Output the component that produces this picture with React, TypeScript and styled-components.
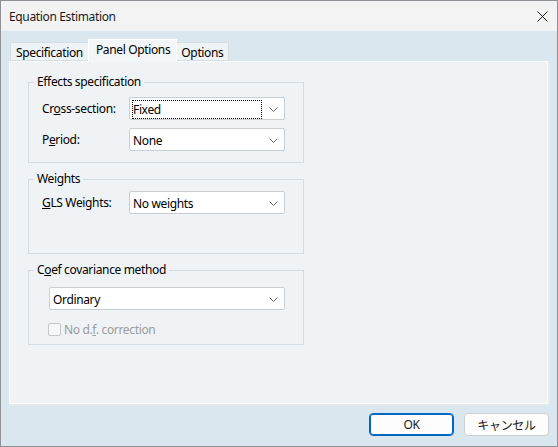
import React from "react";
import styled, { createGlobalStyle } from "styled-components";

const GlobalStyle = createGlobalStyle`
  html, body {
    margin: 0;
    padding: 0;
    background: #ffffff;
  }
  body {
    font-family: "Noto Sans", "Noto Sans CJK JP", sans-serif;
    font-size: 12px;
    letter-spacing: -0.35px;
    color: #000;
  }
`;

const Chevron = () => (
  <svg width="9" height="5" viewBox="0 0 9 5">
    <polyline points="0.5,0.5 4.5,4.5 8.5,0.5" fill="none" stroke="#6a6a6a" strokeWidth="1" />
  </svg>
);

const CloseIcon = () => (
  <svg width="11" height="11" viewBox="0 0 11 11">
    <path d="M0.5 0.5 L10.5 10.5 M10.5 0.5 L0.5 10.5" stroke="#1a1a1a" strokeWidth="1" fill="none" />
  </svg>
);

const Combo = ({ value, width, focused }: { value: string; width: number; focused?: boolean }) => (
  <ComboBox $w={width}>
    <ComboText $focused={focused}>{value}</ComboText>
    <Chevron />
  </ComboBox>
);

const App = () => {
  return (
    <>
      <GlobalStyle />
      <Window>
        <TitleBar>
          <Title>Equation Estimation</Title>
          <CloseButton>
            <CloseIcon />
          </CloseButton>
        </TitleBar>
        <Body>
          <Tabs>
            <Tab>Specification</Tab>
            <Tab $active>Panel Options</Tab>
            <Tab>Options</Tab>
          </Tabs>
          <Panel>
            <Group $h={89} $pt={7} $gap={8}>
              <Legend>Effects specification</Legend>
              <FieldRow>
                <FieldLabel>
                  Cr<u>o</u>ss-section:
                </FieldLabel>
                <Combo value="Fixed" width={156} focused />
              </FieldRow>
              <FieldRow>
                <FieldLabel>
                  P<u>e</u>riod:
                </FieldLabel>
                <Combo value="None" width={156} />
              </FieldRow>
            </Group>
            <Group $h={83} $pt={4} $gap={8}>
              <Legend>Weights</Legend>
              <FieldRow>
                <FieldLabel>
                  <u>G</u>LS Weights:
                </FieldLabel>
                <Combo value="No weights" width={156} />
              </FieldRow>
            </Group>
            <Group $h={83} $pt={9} $gap={8}>
              <Legend>
                C<u>o</u>ef covariance method
              </Legend>
              <Indented>
                <Combo value="Ordinary" width={236} />
                <CheckRow>
                  <CheckBox />
                  <CheckLabel>
                    No d.<u>f</u>. correction
                  </CheckLabel>
                </CheckRow>
              </Indented>
            </Group>
          </Panel>
          <Footer>
            <Button $primary>OK</Button>
            <Button>キャンセル</Button>
          </Footer>
        </Body>
      </Window>
    </>
  );
};

export default App;

const Window = styled.div`
  width: 558px;
  height: 447px;
  box-sizing: border-box;
  border: 1px solid #8d9196;
  display: flex;
  flex-direction: column;
  background: #dae7ef;
`;

const TitleBar = styled.div`
  height: 30px;
  background: #f3f3f3;
  display: flex;
  align-items: center;
  justify-content: space-between;
  padding: 0 9px 0 8px;
`;

const Title = styled.div`
  font-size: 12px;
  color: #1b1b1b;
`;

const CloseButton = styled.div`
  display: flex;
  align-items: center;
`;

const Body = styled.div`
  flex: 1;
  padding: 8px 7px 0 8px;
  display: flex;
  flex-direction: column;
`;

const Tabs = styled.div`
  display: flex;
  align-items: flex-end;
  height: 22px;
  padding-left: 1px;
  position: relative;
  z-index: 1;
`;

const Tab = styled.div<{ $active?: boolean }>`
  box-sizing: border-box;
  height: ${(p) => (p.$active ? "23px" : "19px")};
  margin-bottom: ${(p) => (p.$active ? "-1px" : "0")};
  padding: ${(p) => (p.$active ? "0 6px 3px 7px" : "2px 5px 0")};
  margin-left: ${(p) => (p.$active ? "-1px" : "0")};
  margin-right: ${(p) => (p.$active ? "-2px" : "0")};
  display: flex;
  align-items: center;
  background: ${(p) => (p.$active ? "#f3f6f8" : "#eef3f6")};
  border: 1px solid ${(p) => (p.$active ? "#ffffff" : "#d6dee4")};
  border-bottom: ${(p) => (p.$active ? "none" : "1px solid #d6dee4")};
  color: #000;
  white-space: nowrap;
  z-index: ${(p) => (p.$active ? 2 : 1)};
`;

const Panel = styled.div`
  box-sizing: border-box;
  width: 539px;
  height: 343px;
  background: #eff3f6;
  border: 1px solid #fbfcfd;
  box-shadow: 2px 0 0 #e8edf0, 0 2px 0 #e4e9ec;
  padding: 12px 0 0 18px;
  display: flex;
  flex-direction: column;
  gap: 8px;
`;

const Group = styled.fieldset<{ $h: number; $pt: number; $gap: number }>`
  box-sizing: border-box;
  width: 276px;
  height: ${(p) => p.$h}px;
  margin: 0;
  padding: ${(p) => p.$pt}px 0 0 13px;
  border: 1px solid #d3dce2;
  min-width: 0;
  display: flex;
  flex-direction: column;
  gap: ${(p) => p.$gap}px;
`;

const Legend = styled.legend`
  margin-left: -8px;
  padding: 0 3px;
  line-height: 16px;
  color: #000;
`;

const FieldRow = styled.div`
  display: flex;
  align-items: center;
`;

const FieldLabel = styled.div`
  width: 87px;
  flex-shrink: 0;
  color: #000;
`;

const ComboBox = styled.div<{ $w: number }>`
  box-sizing: border-box;
  width: ${(p) => p.$w}px;
  height: 23px;
  background: #ffffff;
  border: 1px solid #c9ced3;
  border-radius: 2px;
  display: flex;
  align-items: center;
  justify-content: space-between;
  padding: 1px 6px 0 2px;
`;

const ComboText = styled.div<{ $focused?: boolean }>`
  flex: 1;
  height: 19px;
  box-sizing: border-box;
  display: flex;
  align-items: center;
  padding-left: 1px;
  margin-right: 7px;
  outline: ${(p) => (p.$focused ? "1px dotted #000" : "none")};
  outline-offset: -1px;
  color: #000;
`;

const Indented = styled.div`
  padding-left: 7px;
  display: flex;
  flex-direction: column;
  gap: 11px;
`;

const CheckRow = styled.div`
  display: flex;
  align-items: center;
  gap: 3px;
  margin-left: -1px;
`;

const CheckBox = styled.div`
  box-sizing: border-box;
  width: 13px;
  height: 13px;
  border: 1px solid #c3c7cb;
  border-radius: 2px;
  background: #f7f8f9;
`;

const CheckLabel = styled.div`
  color: #9b9b9b;
`;

const Footer = styled.div`
  display: flex;
  justify-content: flex-end;
  gap: 10px;
  padding: 9px 1px 0 0;
`;

const Button = styled.div<{ $primary?: boolean }>`
  box-sizing: border-box;
  width: 85px;
  height: 23px;
  border-radius: 4px;
  display: flex;
  align-items: center;
  justify-content: center;
  background: #fdfdfd;
  border: 1px solid ${(p) => (p.$primary ? "#0067c0" : "#d0d0d0")};
  box-shadow: ${(p) => (p.$primary ? "inset 0 0 0 1px #0067c0" : "none")};
  color: #1a1a1a;
`;
